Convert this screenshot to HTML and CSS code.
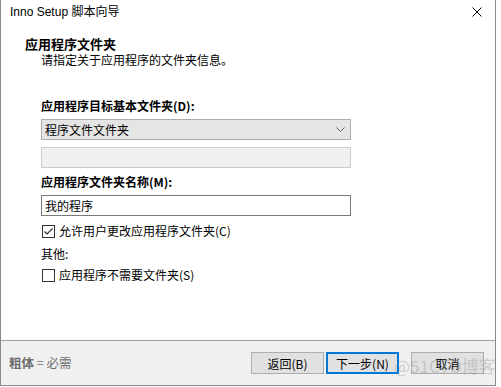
FILE: index.html
```html
<!DOCTYPE html>
<html>

<head>
    <meta charset="utf-8" />
    <title>Inno Setup 脚本向导</title>
    <link rel="stylesheet" href="styles.css">
</head>

<body>
    <div class="window">
        <div class="page">
            <div class="titlebar">
                <span class="title">Inno Setup 脚本向导</span>
                <svg class="close" width="10" height="10" viewBox="0 0 10 10">
                    <path d="M0.5 0.5L9.5 9.5M9.5 0.5L0.5 9.5" stroke="#000" stroke-width="1" fill="none" />
                </svg>
            </div>
            <h1 class="heading">应用程序文件夹</h1>
            <p class="subtitle">请指定关于应用程序的文件夹信息。</p>

            <form class="fields">
                <label class="field-label">应用程序目标基本文件夹(D):</label>
                <div class="combo">
                    <span>程序文件文件夹</span>
                    <svg class="chevron" width="9" height="5" viewBox="0 0 9 5">
                        <path d="M0.5 0.5L4.5 4.5L8.5 0.5" stroke="#606060" stroke-width="1" fill="none" />
                    </svg>
                </div>
                <div class="edit disabled"></div>
                <label class="field-label second">应用程序文件夹名称(M):</label>
                <div class="edit">我的程序</div>

                <div class="check-row first">
                    <span class="box">
                        <svg width="11" height="11" viewBox="0 0 11 11">
                            <path d="M1.5 5.5L4 8L9.5 2.5" stroke="#333" stroke-width="1.2" fill="none" />
                        </svg>
                    </span>
                    <span>允许用户更改应用程序文件夹(C)</span>
                </div>
                <div class="other">其他:</div>
                <div class="check-row">
                    <span class="box"></span>
                    <span>应用程序不需要文件夹(S)</span>
                </div>
            </form>
        </div>

        <div class="footer">
            <span class="note"><b>粗体</b> = 必需</span>
            <div class="buttons">
                <button type="button" class="btn">返回(B)</button>
                <button type="button" class="btn default">下一步(N)</button>
                <button type="button" class="btn cancel">取消</button>
            </div>
            <span class="watermark">@51CTO博客</span>
        </div>
    </div>
</body>

</html>
```

FILE: styles.css
```css
body {
    margin: 0;
    background: #fff;
    font-family: "Noto Sans CJK SC", "Noto Sans", sans-serif;
    font-size: 12px;
    color: #000;
}

.window {
    position: relative;
    width: 496px;
    height: 386px;
    box-sizing: border-box;
    border-left: 1px solid #8a8a8a;
    border-right: 1px solid #8a8a8a;
    border-bottom: 1px solid #8a8a8a;
    display: flex;
    flex-direction: column;
}

.page {
    height: 341px;
    box-sizing: border-box;
    border-bottom: 1px solid #a0a0a0;
    background: #fff;
}

.titlebar {
    height: 24px;
    display: flex;
    align-items: center;
    justify-content: space-between;
    padding: 0 13px 0 9px;
}

.title {
    font-family: "Liberation Sans", "Noto Sans CJK SC", sans-serif;
    font-size: 12px;
    line-height: 16px;
}

.heading {
    margin: 12px 0 0 24px;
    font-size: 13px;
    font-weight: bold;
    line-height: 16px;
}

.subtitle {
    margin: 0 0 0 40px;
    line-height: 16px;
}

.fields {
    margin: 30px 0 0 40px;
    width: 310px;
    display: flex;
    flex-direction: column;
}

.field-label {
    font-size: 12px;
    font-weight: bold;
    line-height: 16px;
    margin-bottom: 5px;
}

.field-label.second {
    margin-top: 6px;
}

.combo {
    height: 21px;
    box-sizing: border-box;
    border: 1px solid #adadad;
    background: #e5e5e5;
    display: flex;
    align-items: center;
    justify-content: space-between;
    padding: 0 5px 0 3px;
    line-height: 16px;
}

.edit {
    height: 21px;
    box-sizing: border-box;
    border: 1px solid #7a7a7a;
    background: #fff;
    padding: 0 3px;
    line-height: 19px;
}

.edit.disabled {
    margin-top: 7px;
    border-color: #cccccc;
    background: #f0f0f0;
}

.check-row {
    display: flex;
    align-items: center;
    gap: 4px;
    line-height: 16px;
    margin-top: 5px;
}

.check-row.first {
    margin-top: 7px;
}

.box {
    width: 13px;
    height: 13px;
    box-sizing: border-box;
    border: 1px solid #333;
    background: #fff;
    display: flex;
    margin-left: 1px;
}

.other {
    line-height: 16px;
    margin-top: 7px;
}

.footer {
    flex: 1;
    background: #f0f0f0;
    display: flex;
    align-items: center;
    padding: 0 11px 0 8px;
}

.note {
    color: #6d6d6d;
    line-height: 16px;
    font-size: 12.5px;
}

.buttons {
    margin-left: auto;
    display: flex;
    gap: 2px;
}

.btn {
    width: 73px;
    height: 22px;
    box-sizing: border-box;
    border: 1px solid #adadad;
    background: #e1e1e1;
    font-family: "Noto Sans CJK SC", sans-serif;
    font-size: 12px;
    color: #000;
    padding: 0;
}

.btn.default {
    border: 2px solid #0078d7;
}

.btn.cancel {
    margin-left: 10px;
}

.watermark {
    position: absolute;
    left: 393px;
    top: 356px;
    white-space: nowrap;
    font-family: "Noto Sans CJK SC", sans-serif;
    font-size: 17px;
    line-height: 20px;
    color: rgba(150, 150, 150, 0.4);
}
```
